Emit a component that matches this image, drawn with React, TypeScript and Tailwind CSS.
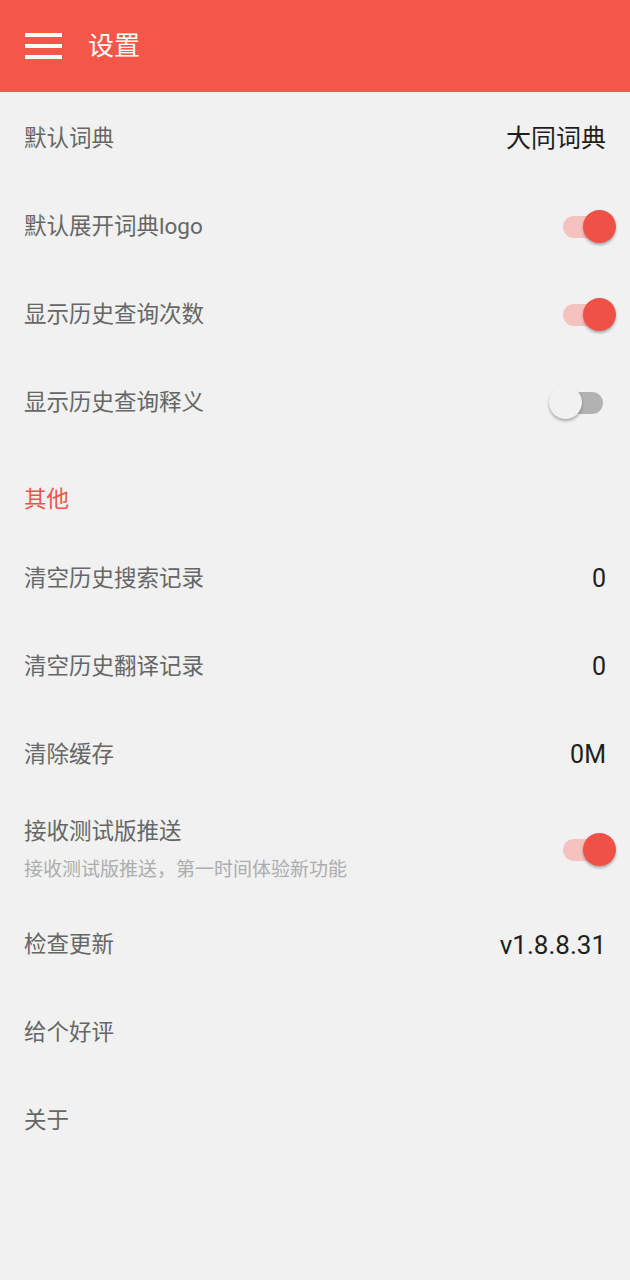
import React from 'react';

const font = { fontFamily: 'Roboto, "Noto Sans CJK SC", sans-serif' };

const Toggle = ({ on }: { on: boolean }) => (
  <div className="relative w-[40px] h-[22px] mr-[3px]">
    <div className={`absolute inset-0 rounded-full ${on ? 'bg-[#f5c3bf]' : 'bg-[#b2b2b2]'}`}></div>
    <div
      className={`absolute top-[-6px] w-[33px] h-[33px] rounded-full shadow-[0_2px_3px_rgba(0,0,0,0.3)] ${
        on ? 'left-[20px] bg-[#ef5146]' : 'left-[-14px] bg-[#f1f1f1]'
      }`}
    ></div>
  </div>
);

const Row = ({ label, children }: { label: string; children?: React.ReactNode }) => (
  <div className="h-[88px] flex items-center justify-between pl-6 pr-6">
    <span className="text-[22.5px] text-[#666666]">{label}</span>
    {children}
  </div>
);

const Value = ({ text }: { text: string }) => (
  <span className="text-[25px] text-[#1e1e1e]">{text}</span>
);

export default function App() {
  return (
    <div className="w-[630px] h-[1280px] bg-[#f0f1f0]" style={font}>
      {/* Toolbar */}
      <div className="h-[92px] bg-[#f4574a] flex items-center pl-[25px]">
        <div className="flex flex-col gap-[6.5px] w-[37px]">
          <div className="h-[4.5px] bg-white"></div>
          <div className="h-[4.5px] bg-white"></div>
          <div className="h-[4.5px] bg-white"></div>
        </div>
        <span className="ml-[26px] text-[26px] text-white">设置</span>
      </div>

      <div className="pt-[3px]">
        <Row label="默认词典">
          <Value text="大同词典" />
        </Row>
        <Row label="默认展开词典logo">
          <Toggle on />
        </Row>
        <Row label="显示历史查询次数">
          <Toggle on />
        </Row>
        <Row label="显示历史查询释义">
          <Toggle on={false} />
        </Row>

        <div className="h-[88px] flex items-end pl-6 pb-[18px]">
          <span className="text-[22.5px] text-[#ee5448]">其他</span>
        </div>

        <Row label="清空历史搜索记录">
          <Value text="0" />
        </Row>
        <Row label="清空历史翻译记录">
          <Value text="0" />
        </Row>
        <Row label="清除缓存">
          <Value text="0M" />
        </Row>

        <div className="h-[102px] flex items-center justify-between pl-6 pr-6">
          <div className="flex flex-col">
            <span className="text-[22.5px] text-[#666666] leading-[28px]">接收测试版推送</span>
            <span className="text-[19px] text-[#adadad] leading-[26px] mt-[12px]">
              接收测试版推送，第一时间体验新功能
            </span>
          </div>
          <Toggle on />
        </div>

        <Row label="检查更新">
          <span className="text-[26px] text-[#1e1e1e]">v1.8.8.31</span>
        </Row>
        <Row label="给个好评" />
        <Row label="关于" />
      </div>
    </div>
  );
}
